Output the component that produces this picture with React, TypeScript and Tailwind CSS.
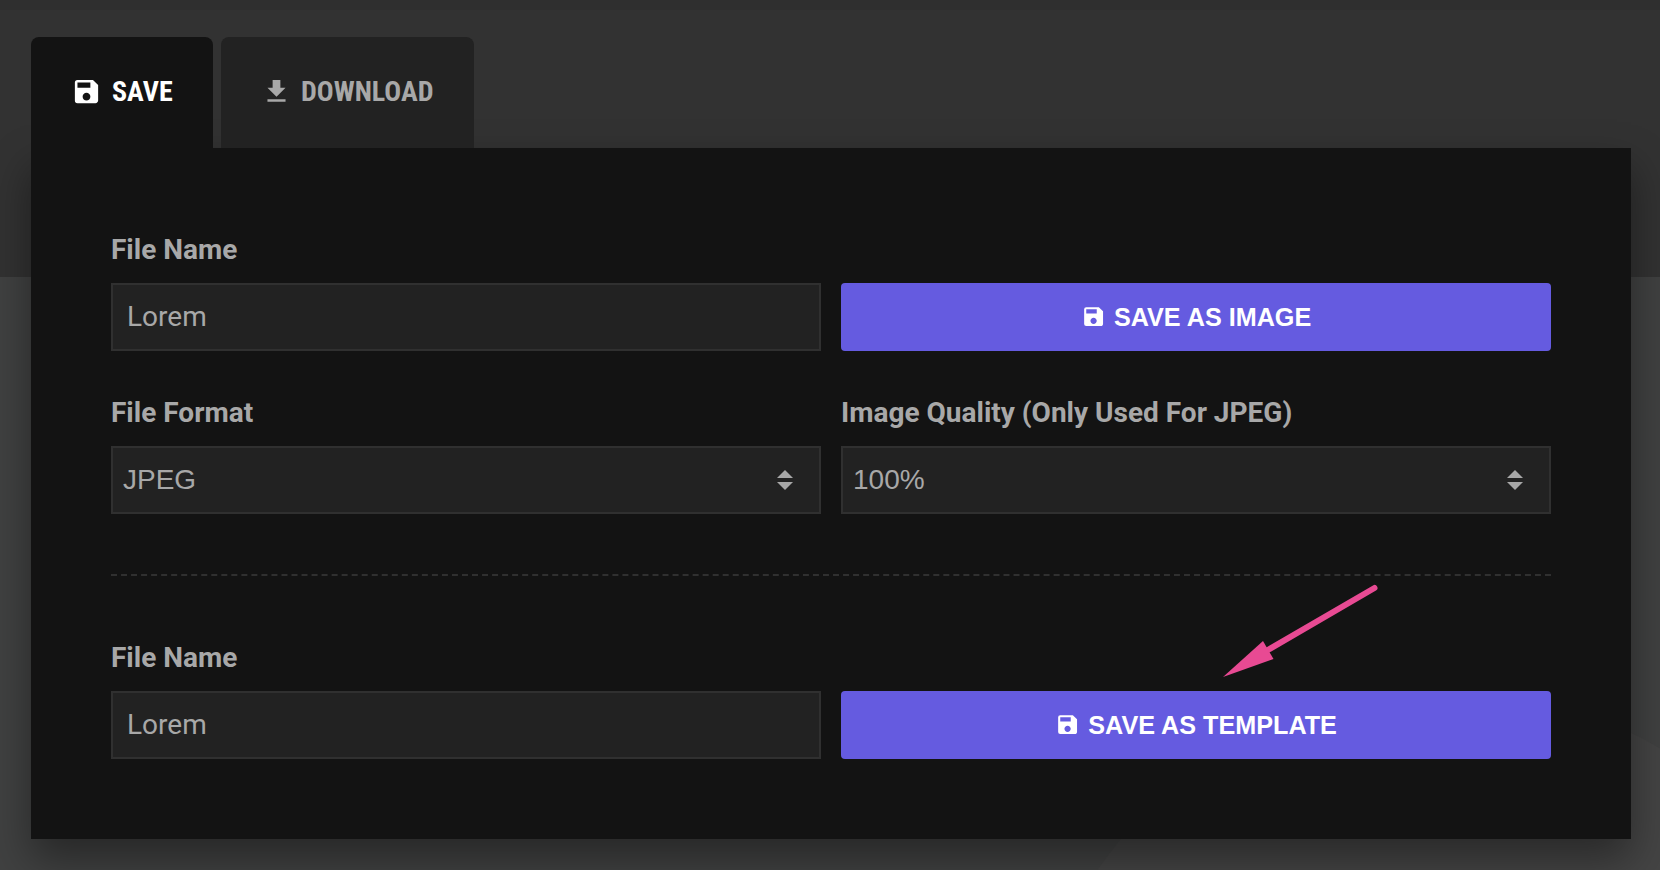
import { MdSave, MdDownload } from "react-icons/md";
import type { ReactNode } from "react";

const control = "h-[68px] w-full border-2 border-[#303030] bg-[#222222] text-[28px] text-[#a8a8a8]";

function Field({ label, children }: { label: string; children: ReactNode }) {
  return (
    <label className="flex flex-col">
      <span className="mb-[17px] h-8 text-[28px] leading-8 font-bold text-[#a8a8a8]">{label}</span>
      {children}
    </label>
  );
}

function TextField({ label, value }: { label: string; value: string }) {
  return (
    <Field label={label}>
      <input className={`${control} px-[14px] pb-[2px] font-normal outline-none`} defaultValue={value} />
    </Field>
  );
}

function SelectField({ label, value }: { label: string; value: string }) {
  return (
    <Field label={label}>
      <span
        className={`${control} flex items-center justify-between pr-[26px] pl-[10px] font-['Liberation_Sans',sans-serif]`}
      >
        {value}
        <svg className="h-5 w-4 fill-[#a8a8a8]" viewBox="0 0 16 20">
          <path d="M0 8 8 0l8 8zM0 12h16l-8 8z" />
        </svg>
      </span>
    </Field>
  );
}

function ActionButton({ label }: { label: string }) {
  return (
    <button className="flex h-[68px] w-full items-center justify-center gap-2 self-end rounded-[4px] bg-[#655be0] font-['Liberation_Sans',sans-serif] text-[25.2px] font-bold text-white">
      <MdSave className="size-[25.2px]" />
      <span className="pt-[2px]">{label}</span>
    </button>
  );
}

function Backdrop() {
  return (
    <div className="absolute inset-0 overflow-hidden">
      <div className="absolute top-[688px] left-[1024px] size-[838px] rounded-full bg-[#444444]" />
      <div className="absolute inset-x-0 top-0 h-[277px] border-t-[10px] border-[#2f2f2f] bg-[#323232]" />
    </div>
  );
}

export default function App() {
  return (
    <div className="relative h-[870px] overflow-hidden bg-[#404141] font-['Roboto',sans-serif]">
      <Backdrop />
      <main className="relative pt-[37px] pr-[29px] pl-[31px]">
        <nav className="relative z-10 flex h-[111px] gap-2 font-['Roboto_Condensed','Roboto',sans-serif] text-[28px] font-bold [font-stretch:75%]">
          <button className="flex w-[182px] items-center rounded-t-[8px] bg-[#131313] pb-[2px] pl-10 text-white">
            <MdSave className="mr-[10px] size-[31px]" />
            <span>SAVE</span>
          </button>
          <button className="flex w-[253px] items-center rounded-t-[8px] bg-[#222222] pb-[2px] pl-[39.5px] text-[#a8a8a8]">
            <MdDownload className="mr-[9.5px] size-[31px]" />
            <span>DOWNLOAD</span>
          </button>
        </nav>
        <section className="h-[691px] bg-[#131313] px-20 pt-[86px] shadow-[0_20px_40px_rgba(0,0,0,0.4)]">
          <div className="grid grid-cols-2 gap-x-5 gap-y-[46px]">
            <TextField label="File Name" value="Lorem" />
            <ActionButton label="SAVE AS IMAGE" />
            <SelectField label="File Format" value="JPEG" />
            <SelectField label="Image Quality (Only Used For JPEG)" value="100%" />
          </div>
          <hr className="mt-[60px] mb-[66px] border-t-2 border-dashed border-[#303030]" />
          <div className="grid grid-cols-2 gap-x-5">
            <TextField label="File Name" value="Lorem" />
            <ActionButton label="SAVE AS TEMPLATE" />
          </div>
        </section>
      </main>
      <svg className="absolute top-[580px] left-[1220px] h-[100px] w-[160px]" viewBox="1220 580 160 100">
        <path d="M1374.500 588 1267 650.500" stroke="#e84a93" strokeWidth="6" strokeLinecap="round" />
        <path d="M1223 677 1263 641 1273.500 659z" fill="#e84a93" />
      </svg>
    </div>
  );
}
